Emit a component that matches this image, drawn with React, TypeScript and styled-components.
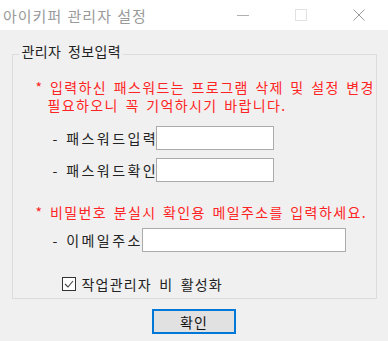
import React from 'react';
import styled, { createGlobalStyle } from 'styled-components';

const GlobalStyle = createGlobalStyle`
  html, body {
    margin: 0;
    padding: 0;
    background: #f0f0f0;
  }
  body {
    font-family: "Noto Sans CJK KR", "Noto Sans", sans-serif;
  }
`;

const Window = styled.div`
  width: 388px;
  height: 341px;
  background: #f0f0f0;
  display: flex;
  flex-direction: column;
  overflow: hidden;
`;

const TitleBar = styled.div`
  height: 30px;
  background: #ffffff;
  display: flex;
  align-items: center;
  flex-shrink: 0;
`;

const Title = styled.div`
  flex: 1;
  padding-left: 3px;
  font-size: 15px;
  color: #9a9a9a;
  letter-spacing: 1px;
  word-spacing: 1px;
  white-space: nowrap;
`;

const CaptionButton = styled.div`
  width: 58px;
  height: 30px;
  display: flex;
  align-items: center;
  justify-content: center;
`;

const Body = styled.div`
  flex: 1;
  display: flex;
  flex-direction: column;
  align-items: center;
  padding-top: 13px;
`;

const Group = styled.fieldset`
  box-sizing: border-box;
  width: 365px;
  margin: 0;
  padding: 0 0 5px 0;
  min-inline-size: 0;
  border: 1px solid #dcdcdc;
  display: flex;
  flex-direction: column;
`;

const Legend = styled.legend`
  margin-left: 6px;
  padding: 0 2px 6px 3px;
  font-size: 14px;
  line-height: 16px;
  color: #222;
  letter-spacing: 0.4px;
  word-spacing: 3px;
`;

const Notice = styled.div<{ $top: number }>`
  margin-top: ${p => p.$top}px;
  padding-left: 23px;
  font-size: 14px;
  line-height: 18px;
  color: #ff2424;
  letter-spacing: 1.4px;
  word-spacing: 2px;
  white-space: nowrap;
`;

const NoticeLine = styled.div<{ $indent?: boolean }>`
  height: 18px;
  padding-left: ${p => (p.$indent ? 12 : 0)}px;
`;

const Field = styled.div<{ $top: number }>`
  margin-top: ${p => p.$top}px;
  padding-left: 40px;
  height: 24px;
  display: flex;
  align-items: center;
`;

const Label = styled.span<{ $w: number }>`
  width: ${p => p.$w}px;
  font-size: 14px;
  color: #222;
  letter-spacing: 2.4px;
  word-spacing: 1px;
  white-space: nowrap;
`;

const TextBox = styled.input<{ $w: number }>`
  box-sizing: border-box;
  width: ${p => p.$w}px;
  height: 24px;
  margin: 0;
  border: 1px solid #ababab;
  background: #fff;
  outline: none;
`;

const CheckRow = styled.label`
  margin-top: 23px;
  padding-left: 49px;
  height: 18px;
  display: flex;
  align-items: center;
  gap: 6px;
  font-size: 14px;
  color: #222;
  letter-spacing: 1.2px;
  word-spacing: 3px;
`;

const CheckBox = styled.span`
  box-sizing: border-box;
  width: 14px;
  height: 14px;
  border: 1px solid #333;
  background: #fff;
  display: flex;
  align-items: center;
  justify-content: center;
`;

const Button = styled.button`
  box-sizing: border-box;
  margin-top: 10px;
  width: 84px;
  height: 25px;
  background: #e1e1e1;
  border: 2px solid #0078d7;
  font-family: inherit;
  font-size: 14px;
  letter-spacing: 1px;
  color: #111;
  padding: 0;
`;

const App: React.FC = () => (
  <Window>
    <GlobalStyle />
    <TitleBar>
      <Title>아이키퍼 관리자 설정</Title>
      <CaptionButton>
        <svg width="12" height="12" viewBox="0 0 12 12">
          <path d="M0 6.5h12" stroke="#b0b0b0" strokeWidth="1" />
        </svg>
      </CaptionButton>
      <CaptionButton>
        <svg width="12" height="12" viewBox="0 0 12 12">
          <rect x="0.5" y="0.5" width="11" height="11" fill="none" stroke="#e2e2e2" />
        </svg>
      </CaptionButton>
      <CaptionButton>
        <svg width="12" height="12" viewBox="0 0 12 12">
          <path d="M0.5 0.5l11 11M11.5 0.5l-11 11" stroke="#9a9a9a" strokeWidth="1" />
        </svg>
      </CaptionButton>
    </TitleBar>
    <Body>
      <Group>
        <Legend>관리자 정보입력</Legend>
        <Notice $top={13}>
          <NoticeLine>* 입력하신 패스워드는 프로그램 삭제 및 설정 변경</NoticeLine>
          <NoticeLine $indent>필요하오니 꼭 기억하시기 바랍니다.</NoticeLine>
        </Notice>
        <Field $top={12}>
          <Label $w={103}>- 패스워드입력</Label>
          <TextBox type="password" $w={118} />
        </Field>
        <Field $top={8}>
          <Label $w={103}>- 패스워드확인</Label>
          <TextBox type="password" $w={118} />
        </Field>
        <Notice $top={21}>
          <NoticeLine>* 비밀번호 분실시 확인용 메일주소를 입력하세요.</NoticeLine>
        </Notice>
        <Field $top={7}>
          <Label $w={89}>- 이메일주소</Label>
          <TextBox type="text" $w={204} />
        </Field>
        <CheckRow>
          <CheckBox>
            <svg width="12" height="12" viewBox="0 0 12 12">
              <path d="M2 6l3 3l5-6" fill="none" stroke="#444" strokeWidth="1.1" />
            </svg>
          </CheckBox>
          작업관리자 비 활성화
        </CheckRow>
      </Group>
      <Button>확인</Button>
    </Body>
  </Window>
);

export default App;
